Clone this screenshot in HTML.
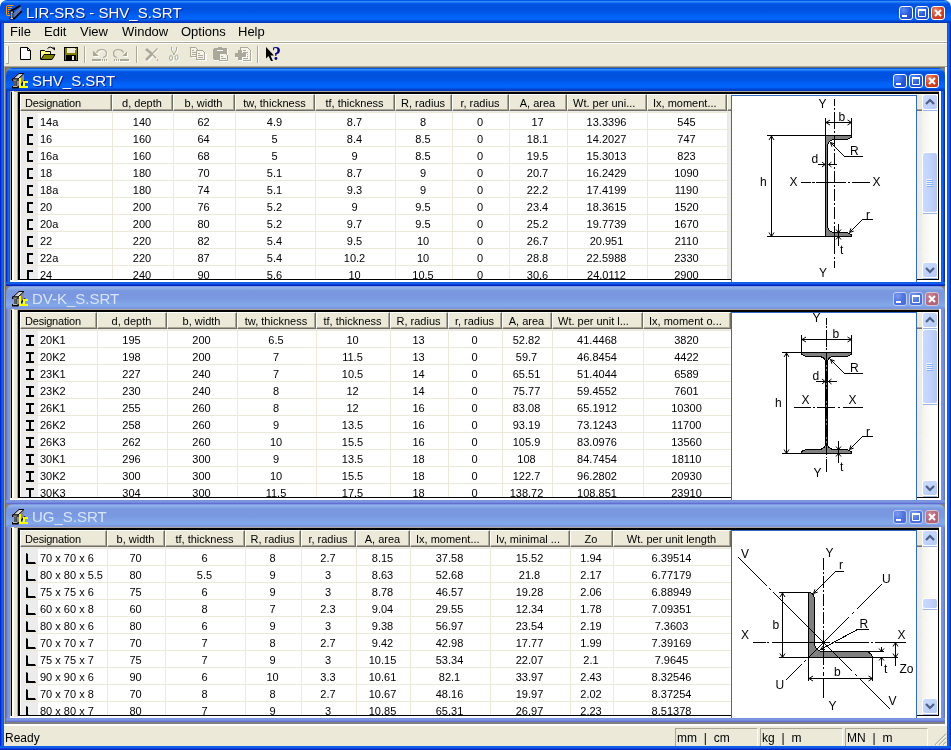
<!DOCTYPE html>
<html lang="en"><head><meta charset="utf-8"><title>LIR-SRS - SHV_S.SRT</title>
<style>
*{box-sizing:border-box;margin:0;padding:0}
html,body{width:951px;height:750px;overflow:hidden;background:#fff;font-family:"Liberation Sans",sans-serif}
#win{will-change:transform;position:absolute;left:0;top:0;width:951px;height:750px;overflow:hidden;background:#ece9d8}
.abs{position:absolute}
#frameL{left:0;top:23px;width:4px;height:727px;background:linear-gradient(90deg,#0019cf 0,#0831d9 25%,#166aee 50%,#0855dd 100%)}
#frameR{left:947px;top:23px;width:4px;height:727px;background:linear-gradient(90deg,#0855dd 0,#166aee 40%,#0831d9 75%,#001ea0 100%)}
#frameB{left:0;top:746px;width:951px;height:4px;background:linear-gradient(180deg,#0855dd 0,#166aee 30%,#0831d9 70%,#001ea0 100%)}
#title{left:0;top:0;width:951px;height:23px;border-radius:7px 7px 0 0;background:linear-gradient(180deg,#0058e6 0,#0058e6 1px,#3a8ff8 1px,#2d85f5 2px,#0a64ee 3px,#0054e3 4px,#0051dd 8px,#0055e5 12px,#0062f8 16px,#0066ff 19px,#0058ea 20px,#004ad6 21px,#003dc8 22px,#0030b0 23px)}
#title .t,.ctitle .t{position:absolute;color:#fff;white-space:nowrap;text-shadow:1px 1px 0 #0a1883}
.btn{position:absolute;width:14px;height:14px;border:1px solid #fff;border-radius:3px;background:radial-gradient(circle at 30% 25%,#5d8cf0 0,#2a5fe0 45%,#1645c6 100%)}
.btn.x{background:radial-gradient(circle at 30% 25%,#e8866a 0,#d5482a 50%,#b8300f 100%)}
.btn svg{position:absolute;left:0;top:0}
.ina .btn{border-color:#c3cff2;background:radial-gradient(circle at 30% 25%,#7f9cee 0,#5076e0 45%,#4468d8 100%)}
.ina .btn.x{border-color:#d9c4d4;background:radial-gradient(circle at 30% 25%,#c98a9a 0,#b5687c 50%,#ad5f74 100%)}
#menu{left:4px;top:23px;width:943px;height:18px;font-size:13px;line-height:15px;color:#000}
#menu span{position:absolute;top:1px;white-space:nowrap}
.hl{position:absolute;left:4px;width:943px;height:1px}
#tb{left:4px;top:44px;width:943px;height:22px}
#status{left:4px;top:726px;width:943px;height:20px;font-size:12px;line-height:15px}
#status span{position:absolute;white-space:nowrap}
.pane{position:absolute;top:728px;height:18px;width:83px;border-left:1px solid #aca899;border-top:1px solid #aca899;border-right:1px solid #fff}
.child{position:absolute;left:6px;width:939px;height:218px;overflow:hidden}
.ctitle{position:absolute;left:0;top:0;width:939px;height:23px;border-radius:7px 7px 0 0}
.child.act .ctitle{background:linear-gradient(180deg,#0058e6 0,#0058e6 1px,#3a8ff8 1px,#2d85f5 2px,#0a64ee 3px,#0054e3 4px,#0051dd 8px,#0055e5 12px,#0062f8 16px,#0066ff 19px,#0058ea 20px,#004ad6 21px,#003dc8 22px,#0030b0 23px)}
.child.ina .ctitle{background:linear-gradient(180deg,#7697e7 0,#7e9ee3 3%,#94afe8 6%,#97b4e9 8%,#82a5e4 14%,#7c9fe2 17%,#7996de 25%,#7b99e1 56%,#82a9e9 81%,#80a5e7 89%,#7b96e1 94%,#7a93df 97%,#8a9fe0 100%)}
.child.ina .ctitle .t{color:#d8e4f8;text-shadow:none}
.child.act .bl{background:linear-gradient(90deg,#0019cf 0,#0831d9 25%,#166aee 50%,#0855dd 100%)}
.child.act .br{background:linear-gradient(90deg,#0855dd 0,#166aee 40%,#0831d9 75%,#001ea0 100%)}
.child.act .bb{background:linear-gradient(180deg,#0855dd 0,#166aee 30%,#0831d9 70%,#001ea0 100%)}
.child.ina .bl{background:linear-gradient(90deg,#5b69cf 0,#6f86dc 30%,#7a96df 60%,#7a93df 100%)}
.child.ina .br{background:linear-gradient(90deg,#7a93df 0,#7a96df 40%,#6f86dc 70%,#5b69cf 100%)}
.child.ina .bb{background:linear-gradient(180deg,#7a93df 0,#7a96df 40%,#6f86dc 70%,#5b5fc8 100%)}
.bl{position:absolute;left:0;top:23px;width:4px;height:195px}
.br{position:absolute;left:935px;top:23px;width:4px;height:195px}
.bb{position:absolute;left:0;top:214px;width:939px;height:4px}
.cl{position:absolute;left:4px;top:23px;width:931px;height:191px;background:#ece9d8;overflow:hidden}
.lv{position:absolute;left:10px;top:3px;width:908px;height:185px;background:#ececec;overflow:hidden;font-size:11px;color:#000}
.hd{position:absolute;left:0;top:0;height:17px;width:908px;background:#ece9d8}
.hc{position:absolute;top:0;height:17px;border-top:1px solid #fff;border-left:1px solid #fff;border-right:1px solid #716f64;border-bottom:1px solid #716f64;background:#ece9d8;white-space:nowrap;overflow:hidden}
.hc i{position:absolute;left:0;top:0;right:0;bottom:0;border-right:1px solid #aca899;border-bottom:1px solid #aca899}
.hc b{position:absolute;left:0;right:1px;top:2px;font-weight:normal;line-height:13px;text-align:center}
.hc.l b{text-align:left;left:4px}
.hc.e b{left:5px}
.hc.d b{letter-spacing:-0.2px}
.row{position:absolute;left:0;height:17px;width:908px;border-top:1px solid #ece9d8}
.c{position:absolute;top:0;height:16px;background:#fff;border-left:1px solid #ece9d8;text-align:center;line-height:19px;white-space:nowrap;overflow:hidden}
.c{padding-right:2px}
.c0{border-left:0;text-align:left;padding-left:2px}
.dg{position:absolute;left:721px;top:4px;width:186px;height:190px;background:#fff;border:1px solid #316ac5;border-bottom:0}
.dg svg{position:absolute;left:-1px;top:-1px}
.dg text{font-family:"Liberation Sans",sans-serif;font-size:12px;fill:#000}
.sb{position:absolute;left:912px;top:3px;width:16px;height:185px;background:linear-gradient(90deg,#f3f1ec 0,#f8f7f3 30%,#fdfdfb 60%,#fefefb 100%)}
.sbb{position:absolute;left:0;width:16px;height:16px;border:1px solid #fff;border-radius:3px;background:linear-gradient(135deg,#cbdcff 0,#c1d3fb 50%,#b7caf5 100%)}
.sbs{position:absolute;left:1px;width:14px;height:1px;background:#9fb5e4}
.sbt{position:absolute;left:0;width:16px;border:1px solid #fff;border-radius:3px;background:linear-gradient(90deg,#c9d9fe 0,#c2d3fc 50%,#b4c7f3 100%)}
</style></head>
<body>
<div id="win">
<div class="abs" style="left:0;top:0;width:951px;height:10px;background:#fff"></div>
<div id="title" class="abs"><svg class="abs" style="left:4px;top:3px" width="20" height="18" viewBox="4 3 20 18">
<path d="M13.500 5.500h-6q-1 0-1 1v8q0 1 1 1h3" fill="none" stroke="#f09a1c" stroke-width="1"/>
<path d="M8 7.500h4M8 9.500h2.500M8 11.500h1.500M8 13.500h1" stroke="#f09a1c" stroke-width="1" fill="none"/>
<path d="M13.500 12.500L21.500 6v5L14 19z" fill="#4f6db0"/>
<path d="M14.500 13.500L21 8M15 15.500L21 10" stroke="#8fa3cf" stroke-width="0.700" stroke-dasharray="1 1"/>
<path d="M10 11.500L20.500 5.500" stroke="#000" stroke-width="1.700"/>
<path d="M14 19L21.800 11" stroke="#000" stroke-width="1.700"/>
<path d="M9.500 11h4.500v2h-1.200v4.500h1.200v2h-4.500v-2h1.200v-4.500h-1.200z" fill="#000"/>
<path d="M10.500 12h2.500M11.800 12v6.500M10.500 18.500h2.500" stroke="#d8d8d8" stroke-width="1" fill="none"/>
</svg><span class="t" style="left:26px;top:4px;font-size:15px;line-height:17px">LIR-SRS - SHV_S.SRT</span><div class="btn" style="left:899px;top:6px"><svg width="12" height="12"><rect x="2" y="8" width="5" height="2" fill="#fff"/></svg></div><div class="btn" style="left:915px;top:6px"><svg width="12" height="12"><path d="M2.5 3.5h7v6h-7z" fill="none" stroke="#fff"/><rect x="2" y="2" width="8" height="2" fill="#fff"/></svg></div><div class="btn x" style="left:931px;top:6px"><svg width="12" height="12"><path d="M3 3l6 6M9 3l-6 6" stroke="#fff" stroke-width="2" fill="none"/></svg></div></div>
<div id="frameL" class="abs"></div><div id="frameR" class="abs"></div><div id="frameB" class="abs"></div>
<div id="menu" class="abs"><span style="left:6px">File</span><span style="left:40px">Edit</span><span style="left:76px">View</span><span style="left:118px">Window</span><span style="left:177px">Options</span><span style="left:234px">Help</span></div>
<div class="hl" style="top:41px;background:#fff"></div><div class="hl" style="top:42px;background:#aca899"></div><div class="hl" style="top:43px;background:#fff"></div>
<svg id="tb" class="abs" width="943" height="22" viewBox="4 44 943 22">
<rect x="6" y="46" width="2" height="17" fill="#fff"/><rect x="8" y="46" width="1" height="17" fill="#aca899"/><rect x="6" y="63" width="3" height="1" fill="#aca899"/>
<!-- new -->
<path d="M20.5 47.5h7l3 3v9h-10z" fill="#fff" stroke="#000"/><path d="M27.5 47.5v3h3" fill="none" stroke="#000"/>
<!-- open -->
<path d="M40.5 59.5v-9h4l1 1h5v3" fill="#ffff80" stroke="#000"/><path d="M41 59.5l3-5h11l-3 5z" fill="#808000" stroke="#000"/>
<path d="M47.5 48.5q3-3 6 0.5" fill="none" stroke="#000"/><path d="M52 47.5h3v3z" fill="#000"/>
<!-- save -->
<rect x="64.5" y="47.5" width="13" height="13" fill="#808000" stroke="#000"/><rect x="67" y="48" width="8" height="5" fill="#ece9d8"/><rect x="66" y="55" width="10" height="6" fill="#000"/><rect x="72" y="56" width="2" height="4" fill="#ece9d8"/><rect x="75" y="49" width="1" height="1" fill="#fff"/>
<rect x="84" y="46" width="1" height="17" fill="#aca899"/><rect x="85" y="46" width="1" height="17" fill="#fff"/>
<!-- undo -->
<g shape-rendering="crispEdges">
<g transform="translate(1,1)" fill="#fff" stroke="none"><path d="M93 51v5h5z"/><rect x="92" y="59" width="9" height="2"/><rect x="102" y="59" width="1" height="2"/><rect x="104" y="59" width="1" height="2"/><rect x="106" y="59" width="1" height="2"/></g>
<path d="M93 51v5h5z" fill="#aca899"/><rect x="92" y="59" width="9" height="2" fill="#aca899"/><rect x="102" y="59" width="1" height="2" fill="#aca899"/><rect x="104" y="59" width="1" height="2" fill="#aca899"/><rect x="106" y="59" width="1" height="2" fill="#aca899"/>
<g transform="translate(1,1)" fill="#fff" stroke="none"><path d="M127 51v5h-5z"/><rect x="120" y="59" width="9" height="2"/><rect x="114" y="59" width="1" height="2"/><rect x="116" y="59" width="1" height="2"/><rect x="118" y="59" width="1" height="2"/></g>
<path d="M127 51v5h-5z" fill="#aca899"/><rect x="120" y="59" width="9" height="2" fill="#aca899"/><rect x="114" y="59" width="1" height="2" fill="#aca899"/><rect x="116" y="59" width="1" height="2" fill="#aca899"/><rect x="118" y="59" width="1" height="2" fill="#aca899"/>
</g>
<path d="M97.500 53.500Q98 50 101.500 49.500Q106.500 49.500 106.500 53.500Q106.500 57 103.500 57.500" fill="none" stroke="#fff" stroke-width="1" transform="translate(1,1)"/>
<path d="M96.500 52.500Q98 49.500 101.500 49.500Q106.500 49.500 106.500 53.500Q106.500 57 103 57.500" fill="none" stroke="#aca899" stroke-width="1.200"/>
<path d="M123.500 52.500Q122 49.500 118.500 49.500Q113.500 49.500 113.500 53.500Q113.500 57 117 57.500" fill="none" stroke="#aca899" stroke-width="1.200"/>
<rect x="136" y="46" width="1" height="17" fill="#aca899"/><rect x="137" y="46" width="1" height="17" fill="#fff"/>
<!-- delete -->
<g transform="translate(1,1)" stroke="#fff" fill="none"><path d="M146 49l6 5M146 60l6-6" stroke-width="2.600"/><path d="M152 54l5.500-5.500M152 54l4 4" stroke-width="1"/></g>
<path d="M146 49l6 5M146 60l6-6" stroke="#aca899" stroke-width="2.600" fill="none"/><path d="M152 54l5.500-5.500M152 54l4 4M157 59.500l1 1" stroke="#aca899" stroke-width="1.200" fill="none"/>
<!-- cut -->
<g transform="translate(1,1)" stroke="#fff" fill="none"><path d="M171.500 47v3l3 5M176.500 47v3l-3 5"/><ellipse cx="171" cy="58" rx="1.500" ry="2.500"/><ellipse cx="176.500" cy="57.500" rx="1.500" ry="2.500"/></g>
<path d="M171.500 47v3l3 5M176.500 47v3l-3 5" stroke="#aca899" fill="none"/><ellipse cx="171" cy="58" rx="1.500" ry="2.500" fill="none" stroke="#aca899"/><ellipse cx="176.500" cy="57.500" rx="1.500" ry="2.500" fill="none" stroke="#aca899"/>
<!-- copy -->
<g shape-rendering="crispEdges">
<path d="M191.500 48.500h5.500l3 3v6.500h-8.500z" fill="#fff" stroke="none"/>
<path d="M190.500 47.500h5l2 2v7h-7z" fill="#f6f4ea" stroke="#aca899"/><path d="M192 50.500h2M192 52.500h4M192 54.500h4" stroke="#aca899"/>
<path d="M197.500 51.500h6l3 3v6.500h-9z" fill="#fff" stroke="none"/>
<path d="M196.500 50.500h6l2 2v7h-8z" fill="#f6f4ea" stroke="#aca899"/><path d="M198 53.500h2M198 55.500h5M198 57.500h5" stroke="#aca899"/>
<!-- paste -->
<rect x="214" y="49" width="14" height="12" fill="#fff" stroke="none"/>
<path d="M214 48h12l1 1v10l-1 1h-12l-1-1v-10z" fill="#aca899" stroke="none"/><rect x="218" y="47" width="4" height="1" fill="#aca899"/><rect x="217" y="50" width="6" height="1" fill="#fff"/>
<path d="M220.500 55h7.500v7h-7.500z" fill="#fff" stroke="none"/>
<path d="M219.500 53.500h6l2 2v5h-8z" fill="#f6f4ea" stroke="#aca899"/><path d="M221 56.500h2M221 58.500h5" stroke="#aca899"/>
<!-- paste special -->
<path d="M241.500 48.500h7l3 3v10h-10z" fill="#fff" stroke="none"/>
<path d="M240.500 47.500h7l3 3v10h-10z" fill="#f6f4ea" stroke="#aca899"/><path d="M243 50.500h3M243 52.500h5M243 54.500h5M243 56.500h5M243 58.500h5" stroke="#aca899"/>
<path d="M236 54h11v4h-11zM239 51h4v10h-4z" fill="#fff" stroke="none"/>
<path d="M235 53h11v4h-11zM238 50h4v10h-4z" fill="#aca899" stroke="none"/>
</g>
<rect x="257" y="46" width="1" height="17" fill="#aca899"/><rect x="258" y="46" width="1" height="17" fill="#fff"/>
<!-- help -->
<path d="M266 47v11.500l2.500-2.500l2.500 5h2l-2.500-5.500h3.500z" fill="#000"/>
<text x="272" y="59.500" font-family="Liberation Serif, serif" font-weight="bold" font-size="18" fill="#000080">?</text>
</svg>
<div class="hl" style="top:66px;background:#aca899"></div>
<div class="abs" style="left:4px;top:67px;width:943px;height:659px;background:#808080"></div>
<div class="abs" style="left:4px;top:66px;width:1px;height:660px;background:#aca899"></div>
<div class="abs" style="left:5px;top:67px;width:1px;height:657px;background:#716f64"></div>
<div class="abs" style="left:5px;top:67px;width:940px;height:1px;background:#716f64"></div>
<div class="abs" style="left:945px;top:67px;width:2px;height:659px;background:#fff"></div>
<div class="abs" style="left:4px;top:724px;width:943px;height:2px;background:#fff"></div>
<div class="child act" style="top:68px"><div class="ctitle"><svg class="abs" style="left:4px;top:4px" width="26" height="18" viewBox="10 72 26 18">
<path d="M16 80.500L18 79L24 74V81L18 87.500H16z" fill="#8c8c8c"/>
<path d="M13 79L19 73.500H24L18 79z" fill="#d4d4d4" stroke="#000" stroke-width="1"/>
<path d="M18.500 87.500L25 80.500" stroke="#000" stroke-width="1.600"/>
<path d="M12 78.500h6.500v2.500h-2v5h2v2.500h-6.500v-2.500h2v-5h-2z" fill="#000"/>
<path d="M13 80h4.500M15 80v6.500M13 86.500h4.500" stroke="#b4b4b4" stroke-width="1" fill="none"/>
<path d="M19 78h2v8h7v2h-9z" fill="#ff0"/>
<path d="M23 81h5v2h-3v3h-2z" fill="#ff0"/>
</svg><span class="t" style="left:26px;top:4px;font-size:15px;line-height:17px">SHV_S.SRT</span><div class="btn" style="left:887px;top:6px"><svg width="12" height="12"><rect x="2" y="8" width="5" height="2" fill="#fff"/></svg></div><div class="btn" style="left:903px;top:6px"><svg width="12" height="12"><path d="M2.5 3.5h7v6h-7z" fill="none" stroke="#fff"/><rect x="2" y="2" width="8" height="2" fill="#fff"/></svg></div><div class="btn x" style="left:919px;top:6px"><svg width="12" height="12"><path d="M3 3l6 6M9 3l-6 6" stroke="#fff" stroke-width="2" fill="none"/></svg></div></div><div class="bl"></div><div class="br"></div><div class="bb"></div><div class="cl"><div class="abs" style="left:0;top:0;width:931px;height:1px;background:#aca899"></div><div class="abs" style="left:0;top:0;width:1px;height:189px;background:#aca899"></div><div class="abs" style="left:7px;top:1px;width:1px;height:188px;background:#aca899"></div><div class="abs" style="left:1px;top:1px;width:1px;height:188px;background:#000"></div><div class="abs" style="left:2px;top:0;width:2px;height:190px;background:#fff"></div><div class="abs" style="left:8px;top:1px;width:921px;height:188px;background:#000"></div><div class="abs" style="left:0;top:189px;width:931px;height:2px;background:#fff"></div><div class="abs" style="left:929px;top:0;width:2px;height:191px;background:#fff"></div><div class="abs" style="left:4px;top:189px;width:4px;height:1px;background:#ece9d8"></div><div class="lv"><div class="hd"><div class="hc l d" style="left:0px;width:92px"><i></i><b>Designation</b></div><div class="hc" style="left:92px;width:61px"><i></i><b>d, depth</b></div><div class="hc" style="left:153px;width:62px"><i></i><b>b, width</b></div><div class="hc" style="left:215px;width:80px"><i></i><b>tw, thickness</b></div><div class="hc" style="left:295px;width:80px"><i></i><b>tf, thickness</b></div><div class="hc" style="left:375px;width:57px"><i></i><b>R, radius</b></div><div class="hc" style="left:432px;width:57px"><i></i><b>r, radius</b></div><div class="hc" style="left:489px;width:58px"><i></i><b>A, area</b></div><div class="hc l e" style="left:547px;width:80px"><i></i><b>Wt. per uni...</b></div><div class="hc l e" style="left:627px;width:80px"><i></i><b>Ix, moment...</b></div><div class="hc" style="left:707px;width:201px"><i></i></div></div><div class="row" style="top:18px"><svg class="abs" style="left:7px;top:4px" width="7" height="12"><path d="M0 0h6v2h-4v7h4v2h-6z" fill="#000"/></svg><div class="c c0" style="left:18px;width:74px">14a</div><div class="c" style="left:92px;width:61px">140</div><div class="c" style="left:153px;width:62px">62</div><div class="c" style="left:215px;width:80px">4.9</div><div class="c" style="left:295px;width:80px">8.7</div><div class="c" style="left:375px;width:57px">8</div><div class="c" style="left:432px;width:57px">0</div><div class="c" style="left:489px;width:58px">17</div><div class="c" style="left:547px;width:80px">13.3396</div><div class="c" style="left:627px;width:80px">545</div><div class="c" style="left:707px;width:1px;background:#ececec"></div></div><div class="row" style="top:35px"><svg class="abs" style="left:7px;top:4px" width="7" height="12"><path d="M0 0h6v2h-4v7h4v2h-6z" fill="#000"/></svg><div class="c c0" style="left:18px;width:74px">16</div><div class="c" style="left:92px;width:61px">160</div><div class="c" style="left:153px;width:62px">64</div><div class="c" style="left:215px;width:80px">5</div><div class="c" style="left:295px;width:80px">8.4</div><div class="c" style="left:375px;width:57px">8.5</div><div class="c" style="left:432px;width:57px">0</div><div class="c" style="left:489px;width:58px">18.1</div><div class="c" style="left:547px;width:80px">14.2027</div><div class="c" style="left:627px;width:80px">747</div><div class="c" style="left:707px;width:1px;background:#ececec"></div></div><div class="row" style="top:52px"><svg class="abs" style="left:7px;top:4px" width="7" height="12"><path d="M0 0h6v2h-4v7h4v2h-6z" fill="#000"/></svg><div class="c c0" style="left:18px;width:74px">16a</div><div class="c" style="left:92px;width:61px">160</div><div class="c" style="left:153px;width:62px">68</div><div class="c" style="left:215px;width:80px">5</div><div class="c" style="left:295px;width:80px">9</div><div class="c" style="left:375px;width:57px">8.5</div><div class="c" style="left:432px;width:57px">0</div><div class="c" style="left:489px;width:58px">19.5</div><div class="c" style="left:547px;width:80px">15.3013</div><div class="c" style="left:627px;width:80px">823</div><div class="c" style="left:707px;width:1px;background:#ececec"></div></div><div class="row" style="top:69px"><svg class="abs" style="left:7px;top:4px" width="7" height="12"><path d="M0 0h6v2h-4v7h4v2h-6z" fill="#000"/></svg><div class="c c0" style="left:18px;width:74px">18</div><div class="c" style="left:92px;width:61px">180</div><div class="c" style="left:153px;width:62px">70</div><div class="c" style="left:215px;width:80px">5.1</div><div class="c" style="left:295px;width:80px">8.7</div><div class="c" style="left:375px;width:57px">9</div><div class="c" style="left:432px;width:57px">0</div><div class="c" style="left:489px;width:58px">20.7</div><div class="c" style="left:547px;width:80px">16.2429</div><div class="c" style="left:627px;width:80px">1090</div><div class="c" style="left:707px;width:1px;background:#ececec"></div></div><div class="row" style="top:86px"><svg class="abs" style="left:7px;top:4px" width="7" height="12"><path d="M0 0h6v2h-4v7h4v2h-6z" fill="#000"/></svg><div class="c c0" style="left:18px;width:74px">18a</div><div class="c" style="left:92px;width:61px">180</div><div class="c" style="left:153px;width:62px">74</div><div class="c" style="left:215px;width:80px">5.1</div><div class="c" style="left:295px;width:80px">9.3</div><div class="c" style="left:375px;width:57px">9</div><div class="c" style="left:432px;width:57px">0</div><div class="c" style="left:489px;width:58px">22.2</div><div class="c" style="left:547px;width:80px">17.4199</div><div class="c" style="left:627px;width:80px">1190</div><div class="c" style="left:707px;width:1px;background:#ececec"></div></div><div class="row" style="top:103px"><svg class="abs" style="left:7px;top:4px" width="7" height="12"><path d="M0 0h6v2h-4v7h4v2h-6z" fill="#000"/></svg><div class="c c0" style="left:18px;width:74px">20</div><div class="c" style="left:92px;width:61px">200</div><div class="c" style="left:153px;width:62px">76</div><div class="c" style="left:215px;width:80px">5.2</div><div class="c" style="left:295px;width:80px">9</div><div class="c" style="left:375px;width:57px">9.5</div><div class="c" style="left:432px;width:57px">0</div><div class="c" style="left:489px;width:58px">23.4</div><div class="c" style="left:547px;width:80px">18.3615</div><div class="c" style="left:627px;width:80px">1520</div><div class="c" style="left:707px;width:1px;background:#ececec"></div></div><div class="row" style="top:120px"><svg class="abs" style="left:7px;top:4px" width="7" height="12"><path d="M0 0h6v2h-4v7h4v2h-6z" fill="#000"/></svg><div class="c c0" style="left:18px;width:74px">20a</div><div class="c" style="left:92px;width:61px">200</div><div class="c" style="left:153px;width:62px">80</div><div class="c" style="left:215px;width:80px">5.2</div><div class="c" style="left:295px;width:80px">9.7</div><div class="c" style="left:375px;width:57px">9.5</div><div class="c" style="left:432px;width:57px">0</div><div class="c" style="left:489px;width:58px">25.2</div><div class="c" style="left:547px;width:80px">19.7739</div><div class="c" style="left:627px;width:80px">1670</div><div class="c" style="left:707px;width:1px;background:#ececec"></div></div><div class="row" style="top:137px"><svg class="abs" style="left:7px;top:4px" width="7" height="12"><path d="M0 0h6v2h-4v7h4v2h-6z" fill="#000"/></svg><div class="c c0" style="left:18px;width:74px">22</div><div class="c" style="left:92px;width:61px">220</div><div class="c" style="left:153px;width:62px">82</div><div class="c" style="left:215px;width:80px">5.4</div><div class="c" style="left:295px;width:80px">9.5</div><div class="c" style="left:375px;width:57px">10</div><div class="c" style="left:432px;width:57px">0</div><div class="c" style="left:489px;width:58px">26.7</div><div class="c" style="left:547px;width:80px">20.951</div><div class="c" style="left:627px;width:80px">2110</div><div class="c" style="left:707px;width:1px;background:#ececec"></div></div><div class="row" style="top:154px"><svg class="abs" style="left:7px;top:4px" width="7" height="12"><path d="M0 0h6v2h-4v7h4v2h-6z" fill="#000"/></svg><div class="c c0" style="left:18px;width:74px">22a</div><div class="c" style="left:92px;width:61px">220</div><div class="c" style="left:153px;width:62px">87</div><div class="c" style="left:215px;width:80px">5.4</div><div class="c" style="left:295px;width:80px">10.2</div><div class="c" style="left:375px;width:57px">10</div><div class="c" style="left:432px;width:57px">0</div><div class="c" style="left:489px;width:58px">28.8</div><div class="c" style="left:547px;width:80px">22.5988</div><div class="c" style="left:627px;width:80px">2330</div><div class="c" style="left:707px;width:1px;background:#ececec"></div></div><div class="row" style="top:171px"><svg class="abs" style="left:7px;top:4px" width="7" height="12"><path d="M0 0h6v2h-4v7h4v2h-6z" fill="#000"/></svg><div class="c c0" style="left:18px;width:74px">24</div><div class="c" style="left:92px;width:61px">240</div><div class="c" style="left:153px;width:62px">90</div><div class="c" style="left:215px;width:80px">5.6</div><div class="c" style="left:295px;width:80px">10</div><div class="c" style="left:375px;width:57px">10.5</div><div class="c" style="left:432px;width:57px">0</div><div class="c" style="left:489px;width:58px">30.6</div><div class="c" style="left:547px;width:80px">24.0112</div><div class="c" style="left:627px;width:80px">2900</div><div class="c" style="left:707px;width:1px;background:#ececec"></div></div><div class="abs" style="left:0;top:17px;width:1px;height:168px;background:#fff"></div></div><div class="sb"><div class="sbb" style="top:0"><svg class="abs" style="left:0;top:0" width="14" height="14"><path d="M3 9l4-4l4 4" fill="none" stroke="#4d6185" stroke-width="2.200"/></svg></div><div class="sbt" style="top:58px;height:61px"><svg class="abs" style="left:3px;top:26px" width="8" height="9"><path d="M0 0.500h6M0 2.500h6M0 4.500h6M0 6.500h6" stroke="#eef4fe"/><path d="M1 1.500h6M1 3.500h6M1 5.500h6M1 7.500h6" stroke="#8cb0f8"/></svg></div><div class="sbb" style="top:168px;height:16px"><svg class="abs" style="left:0;top:0" width="14" height="14"><path d="M3 5l4 4l4-4" fill="none" stroke="#4d6185" stroke-width="2.200"/></svg></div><div class="sbs" style="top:16px"></div><div class="sbs" style="top:184px"></div><div class="sbs" style="top:119px"></div></div><div class="dg" style="top:4px"><svg width="186" height="190" viewBox="731 95 186 190" fill="none" stroke="#000" stroke-width="1" shape-rendering="crispEdges"><path d="M825.5 135.5H851.5V137.5L846.5 139.5H834.5Q828 140 827.5 146V226Q828 232 834.5 232.5H846.5L851.5 234.5V236.5H825.5Z" fill="#808080"/><path d="M834.5 99V106M834.5 108V110M834.5 112V129M834.5 131V133M834.5 135V147M834.5 149V151M834.5 153V165M834.5 167V169M834.5 171V183M834.5 185V187M834.5 189V201M834.5 203V205M834.5 207V219M834.5 222V224M834.5 226V254M834.5 257V259M834.5 261V268" /><path d="M801 182.5H811M812 182.5H815M816 182.5H846M848 182.5H850M852 182.5H870" /><path d="M767 135.5H852" /><path d="M767 236.5H852" /><path d="M771.5 136V236" /><path shape-rendering="auto" d="M774.0 140.0L771.5 136L769.0 140.0"/><path shape-rendering="auto" d="M769.0 232.5L771.5 236.5L774.0 232.5"/><path d="M825.5 118V135" /><path d="M851.5 118V135" /><path d="M826 122.5H851" /><path shape-rendering="auto" d="M830.0 120.0L826 122.5L830.0 125.0"/><path shape-rendering="auto" d="M847.5 125.0L851.5 122.5L847.5 120.0"/><path d="M830.5 142.5L844.5 156.5H863" /><path shape-rendering="auto" d="M834.7 143.9L830.5 142.5L831.9 146.7"/><path d="M818 164.5H825M828 164.5H837" /><path shape-rendering="auto" d="M822.0 167.0L825 164.5L822.0 162.0"/><path shape-rendering="auto" d="M831.5 162.0L828.5 164.5L831.5 167.0"/><path d="M873 219.5H862.5L849.5 232.5" /><path shape-rendering="auto" d="M850.9 228.3L849.5 232.5L853.7 231.1"/><path d="M838.5 224V246" /><path shape-rendering="auto" d="M836.0 229.5L838.5 232.5L841.0 229.5"/><path shape-rendering="auto" d="M841.0 239.5L838.5 236.5L836.0 239.5"/><text x="818.5" y="107.5" stroke="none" text-anchor="start">Y</text><text x="819" y="276.5" stroke="none" text-anchor="start">Y</text><text x="789.5" y="185.5" stroke="none" text-anchor="start">X</text><text x="872.5" y="185.5" stroke="none" text-anchor="start">X</text><text x="838.5" y="121" stroke="none" text-anchor="start">b</text><text x="850" y="155" stroke="none" text-anchor="start">R</text><text x="811.5" y="163" stroke="none" text-anchor="start">d</text><text x="760" y="186" stroke="none" text-anchor="start">h</text><text x="866" y="218.5" stroke="none" text-anchor="start">r</text><text x="840" y="254" stroke="none" text-anchor="start">t</text></svg></div></div></div>
<div class="child ina" style="top:286px"><div class="ctitle"><svg class="abs" style="left:4px;top:4px" width="26" height="18" viewBox="10 72 26 18">
<path d="M16 80.500L18 79L24 74V81L18 87.500H16z" fill="#8c8c8c"/>
<path d="M13 79L19 73.500H24L18 79z" fill="#d4d4d4" stroke="#000" stroke-width="1"/>
<path d="M18.500 87.500L25 80.500" stroke="#000" stroke-width="1.600"/>
<path d="M12 78.500h6.500v2.500h-2v5h2v2.500h-6.500v-2.500h2v-5h-2z" fill="#000"/>
<path d="M13 80h4.500M15 80v6.500M13 86.500h4.500" stroke="#b4b4b4" stroke-width="1" fill="none"/>
<path d="M19 78h2v8h7v2h-9z" fill="#ff0"/>
<path d="M23 81h5v2h-3v3h-2z" fill="#ff0"/>
</svg><span class="t" style="left:26px;top:4px;font-size:15px;line-height:17px">DV-K_S.SRT</span><div class="btn" style="left:887px;top:6px"><svg width="12" height="12"><rect x="2" y="8" width="5" height="2" fill="#fff"/></svg></div><div class="btn" style="left:903px;top:6px"><svg width="12" height="12"><path d="M2.5 3.5h7v6h-7z" fill="none" stroke="#fff"/><rect x="2" y="2" width="8" height="2" fill="#fff"/></svg></div><div class="btn x" style="left:919px;top:6px"><svg width="12" height="12"><path d="M3 3l6 6M9 3l-6 6" stroke="#fff" stroke-width="2" fill="none"/></svg></div></div><div class="bl"></div><div class="br"></div><div class="bb"></div><div class="cl"><div class="abs" style="left:0;top:0;width:931px;height:1px;background:#aca899"></div><div class="abs" style="left:0;top:0;width:1px;height:189px;background:#aca899"></div><div class="abs" style="left:7px;top:1px;width:1px;height:188px;background:#aca899"></div><div class="abs" style="left:1px;top:1px;width:1px;height:188px;background:#000"></div><div class="abs" style="left:2px;top:0;width:2px;height:190px;background:#fff"></div><div class="abs" style="left:8px;top:1px;width:921px;height:188px;background:#000"></div><div class="abs" style="left:0;top:189px;width:931px;height:2px;background:#fff"></div><div class="abs" style="left:929px;top:0;width:2px;height:191px;background:#fff"></div><div class="abs" style="left:4px;top:189px;width:4px;height:1px;background:#ece9d8"></div><div class="lv"><div class="hd"><div class="hc l d" style="left:0px;width:77px"><i></i><b>Designation</b></div><div class="hc" style="left:77px;width:70px"><i></i><b>d, depth</b></div><div class="hc" style="left:147px;width:70px"><i></i><b>b, width</b></div><div class="hc" style="left:217px;width:79px"><i></i><b>tw, thickness</b></div><div class="hc" style="left:296px;width:74px"><i></i><b>tf, thickness</b></div><div class="hc" style="left:370px;width:58px"><i></i><b>R, radius</b></div><div class="hc" style="left:428px;width:54px"><i></i><b>r, radius</b></div><div class="hc" style="left:482px;width:50px"><i></i><b>A, area</b></div><div class="hc l e" style="left:532px;width:91px"><i></i><b>Wt. per unit l...</b></div><div class="hc l e" style="left:623px;width:88px"><i></i><b>Ix, moment o...</b></div><div class="hc" style="left:711px;width:197px"><i></i></div></div><div class="row" style="top:18px"><svg class="abs" style="left:6px;top:4px" width="9" height="12"><path d="M0 0h8v2h-3v7h3v2h-8v-2h3v-7h-3z" fill="#000"/></svg><div class="c c0" style="left:18px;width:59px">20K1</div><div class="c" style="left:77px;width:70px">195</div><div class="c" style="left:147px;width:70px">200</div><div class="c" style="left:217px;width:79px">6.5</div><div class="c" style="left:296px;width:74px">10</div><div class="c" style="left:370px;width:58px">13</div><div class="c" style="left:428px;width:54px">0</div><div class="c" style="left:482px;width:50px">52.82</div><div class="c" style="left:532px;width:91px">41.4468</div><div class="c" style="left:623px;width:88px">3820</div><div class="c" style="left:711px;width:1px;background:#ececec"></div></div><div class="row" style="top:35px"><svg class="abs" style="left:6px;top:4px" width="9" height="12"><path d="M0 0h8v2h-3v7h3v2h-8v-2h3v-7h-3z" fill="#000"/></svg><div class="c c0" style="left:18px;width:59px">20K2</div><div class="c" style="left:77px;width:70px">198</div><div class="c" style="left:147px;width:70px">200</div><div class="c" style="left:217px;width:79px">7</div><div class="c" style="left:296px;width:74px">11.5</div><div class="c" style="left:370px;width:58px">13</div><div class="c" style="left:428px;width:54px">0</div><div class="c" style="left:482px;width:50px">59.7</div><div class="c" style="left:532px;width:91px">46.8454</div><div class="c" style="left:623px;width:88px">4422</div><div class="c" style="left:711px;width:1px;background:#ececec"></div></div><div class="row" style="top:52px"><svg class="abs" style="left:6px;top:4px" width="9" height="12"><path d="M0 0h8v2h-3v7h3v2h-8v-2h3v-7h-3z" fill="#000"/></svg><div class="c c0" style="left:18px;width:59px">23K1</div><div class="c" style="left:77px;width:70px">227</div><div class="c" style="left:147px;width:70px">240</div><div class="c" style="left:217px;width:79px">7</div><div class="c" style="left:296px;width:74px">10.5</div><div class="c" style="left:370px;width:58px">14</div><div class="c" style="left:428px;width:54px">0</div><div class="c" style="left:482px;width:50px">65.51</div><div class="c" style="left:532px;width:91px">51.4044</div><div class="c" style="left:623px;width:88px">6589</div><div class="c" style="left:711px;width:1px;background:#ececec"></div></div><div class="row" style="top:69px"><svg class="abs" style="left:6px;top:4px" width="9" height="12"><path d="M0 0h8v2h-3v7h3v2h-8v-2h3v-7h-3z" fill="#000"/></svg><div class="c c0" style="left:18px;width:59px">23K2</div><div class="c" style="left:77px;width:70px">230</div><div class="c" style="left:147px;width:70px">240</div><div class="c" style="left:217px;width:79px">8</div><div class="c" style="left:296px;width:74px">12</div><div class="c" style="left:370px;width:58px">14</div><div class="c" style="left:428px;width:54px">0</div><div class="c" style="left:482px;width:50px">75.77</div><div class="c" style="left:532px;width:91px">59.4552</div><div class="c" style="left:623px;width:88px">7601</div><div class="c" style="left:711px;width:1px;background:#ececec"></div></div><div class="row" style="top:86px"><svg class="abs" style="left:6px;top:4px" width="9" height="12"><path d="M0 0h8v2h-3v7h3v2h-8v-2h3v-7h-3z" fill="#000"/></svg><div class="c c0" style="left:18px;width:59px">26K1</div><div class="c" style="left:77px;width:70px">255</div><div class="c" style="left:147px;width:70px">260</div><div class="c" style="left:217px;width:79px">8</div><div class="c" style="left:296px;width:74px">12</div><div class="c" style="left:370px;width:58px">16</div><div class="c" style="left:428px;width:54px">0</div><div class="c" style="left:482px;width:50px">83.08</div><div class="c" style="left:532px;width:91px">65.1912</div><div class="c" style="left:623px;width:88px">10300</div><div class="c" style="left:711px;width:1px;background:#ececec"></div></div><div class="row" style="top:103px"><svg class="abs" style="left:6px;top:4px" width="9" height="12"><path d="M0 0h8v2h-3v7h3v2h-8v-2h3v-7h-3z" fill="#000"/></svg><div class="c c0" style="left:18px;width:59px">26K2</div><div class="c" style="left:77px;width:70px">258</div><div class="c" style="left:147px;width:70px">260</div><div class="c" style="left:217px;width:79px">9</div><div class="c" style="left:296px;width:74px">13.5</div><div class="c" style="left:370px;width:58px">16</div><div class="c" style="left:428px;width:54px">0</div><div class="c" style="left:482px;width:50px">93.19</div><div class="c" style="left:532px;width:91px">73.1243</div><div class="c" style="left:623px;width:88px">11700</div><div class="c" style="left:711px;width:1px;background:#ececec"></div></div><div class="row" style="top:120px"><svg class="abs" style="left:6px;top:4px" width="9" height="12"><path d="M0 0h8v2h-3v7h3v2h-8v-2h3v-7h-3z" fill="#000"/></svg><div class="c c0" style="left:18px;width:59px">26K3</div><div class="c" style="left:77px;width:70px">262</div><div class="c" style="left:147px;width:70px">260</div><div class="c" style="left:217px;width:79px">10</div><div class="c" style="left:296px;width:74px">15.5</div><div class="c" style="left:370px;width:58px">16</div><div class="c" style="left:428px;width:54px">0</div><div class="c" style="left:482px;width:50px">105.9</div><div class="c" style="left:532px;width:91px">83.0976</div><div class="c" style="left:623px;width:88px">13560</div><div class="c" style="left:711px;width:1px;background:#ececec"></div></div><div class="row" style="top:137px"><svg class="abs" style="left:6px;top:4px" width="9" height="12"><path d="M0 0h8v2h-3v7h3v2h-8v-2h3v-7h-3z" fill="#000"/></svg><div class="c c0" style="left:18px;width:59px">30K1</div><div class="c" style="left:77px;width:70px">296</div><div class="c" style="left:147px;width:70px">300</div><div class="c" style="left:217px;width:79px">9</div><div class="c" style="left:296px;width:74px">13.5</div><div class="c" style="left:370px;width:58px">18</div><div class="c" style="left:428px;width:54px">0</div><div class="c" style="left:482px;width:50px">108</div><div class="c" style="left:532px;width:91px">84.7454</div><div class="c" style="left:623px;width:88px">18110</div><div class="c" style="left:711px;width:1px;background:#ececec"></div></div><div class="row" style="top:154px"><svg class="abs" style="left:6px;top:4px" width="9" height="12"><path d="M0 0h8v2h-3v7h3v2h-8v-2h3v-7h-3z" fill="#000"/></svg><div class="c c0" style="left:18px;width:59px">30K2</div><div class="c" style="left:77px;width:70px">300</div><div class="c" style="left:147px;width:70px">300</div><div class="c" style="left:217px;width:79px">10</div><div class="c" style="left:296px;width:74px">15.5</div><div class="c" style="left:370px;width:58px">18</div><div class="c" style="left:428px;width:54px">0</div><div class="c" style="left:482px;width:50px">122.7</div><div class="c" style="left:532px;width:91px">96.2802</div><div class="c" style="left:623px;width:88px">20930</div><div class="c" style="left:711px;width:1px;background:#ececec"></div></div><div class="row" style="top:171px"><svg class="abs" style="left:6px;top:4px" width="9" height="12"><path d="M0 0h8v2h-3v7h3v2h-8v-2h3v-7h-3z" fill="#000"/></svg><div class="c c0" style="left:18px;width:59px">30K3</div><div class="c" style="left:77px;width:70px">304</div><div class="c" style="left:147px;width:70px">300</div><div class="c" style="left:217px;width:79px">11.5</div><div class="c" style="left:296px;width:74px">17.5</div><div class="c" style="left:370px;width:58px">18</div><div class="c" style="left:428px;width:54px">0</div><div class="c" style="left:482px;width:50px">138.72</div><div class="c" style="left:532px;width:91px">108.851</div><div class="c" style="left:623px;width:88px">23910</div><div class="c" style="left:711px;width:1px;background:#ececec"></div></div><div class="abs" style="left:0;top:17px;width:1px;height:168px;background:#fff"></div></div><div class="sb"><div class="sbb" style="top:0"><svg class="abs" style="left:0;top:0" width="14" height="14"><path d="M3 9l4-4l4 4" fill="none" stroke="#4d6185" stroke-width="2.200"/></svg></div><div class="sbt" style="top:17px;height:75px"><svg class="abs" style="left:3px;top:33px" width="8" height="9"><path d="M0 0.500h6M0 2.500h6M0 4.500h6M0 6.500h6" stroke="#eef4fe"/><path d="M1 1.500h6M1 3.500h6M1 5.500h6M1 7.500h6" stroke="#8cb0f8"/></svg></div><div class="sbb" style="top:168px;height:16px"><svg class="abs" style="left:0;top:0" width="14" height="14"><path d="M3 5l4 4l4-4" fill="none" stroke="#4d6185" stroke-width="2.200"/></svg></div><div class="sbs" style="top:16px"></div><div class="sbs" style="top:184px"></div><div class="sbs" style="top:92px"></div></div><div class="dg" style="top:3px"><svg width="186" height="190" viewBox="731 312 186 190" fill="none" stroke="#000" stroke-width="1" shape-rendering="crispEdges"><path d="M801.5 352.5H851.5V354.5L847 356.5H833Q828 357.5 827.5 362V444Q828 448.500 833 449.500H847L851.500 451.500V453.500H801.500V451.500L806 449.500H820Q825 448.500 825.500 444V362Q825 357.500 820 356.500H806L801.500 354.500Z" fill="#808080"/><path d="M826.5 318V325M826.5 326V328M826.5 330V347M826.5 348V350M826.5 352V365M826.5 367V369M826.5 371V383M826.5 385V387M826.5 389V401M826.5 403V405M826.5 407V419M826.5 421V423M826.5 425V437M826.5 439V441M826.5 443V455M826.5 457V458M826.5 459V472" /><path d="M794 407.5H811M813 407.5H815M817 407.5H835M838 407.5H840M843 407.5H863" /><path d="M782 352.5H852" /><path d="M782 453.5H852" /><path d="M786.5 353V453" /><path shape-rendering="auto" d="M789.0 357.0L786.5 353L784.0 357.0"/><path shape-rendering="auto" d="M784.0 449.5L786.5 453.5L789.0 449.5"/><path d="M801.5 335V352" /><path d="M851.5 335V352" /><path d="M802 339.5H851" /><path shape-rendering="auto" d="M806.0 337.0L802 339.5L806.0 342.0"/><path shape-rendering="auto" d="M847.5 342.0L851.5 339.5L847.5 337.0"/><path d="M830.5 359.5L844.5 373.5H863" /><path shape-rendering="auto" d="M834.7 360.9L830.5 359.5L831.9 363.7"/><path d="M816 381.5H825M828 381.5H837" /><path shape-rendering="auto" d="M822.0 384.0L825 381.5L822.0 379.0"/><path shape-rendering="auto" d="M831.5 379.0L828.5 381.5L831.5 384.0"/><path d="M873 436.5H862.5L849.5 449.5" /><path shape-rendering="auto" d="M850.9 445.3L849.5 449.5L853.7 448.1"/><path d="M838.5 441V463" /><path shape-rendering="auto" d="M836.0 446.5L838.5 449.5L841.0 446.5"/><path shape-rendering="auto" d="M841.0 456.5L838.5 453.5L836.0 456.5"/><text x="812.5" y="321.5" stroke="none" text-anchor="start">Y</text><text x="813.5" y="477" stroke="none" text-anchor="start">Y</text><text x="801.5" y="403.5" stroke="none" text-anchor="start">X</text><text x="848.5" y="403.5" stroke="none" text-anchor="start">X</text><text x="832.5" y="337.5" stroke="none" text-anchor="start">b</text><text x="850" y="372" stroke="none" text-anchor="start">R</text><text x="812.5" y="379.5" stroke="none" text-anchor="start">d</text><text x="775" y="407" stroke="none" text-anchor="start">h</text><text x="866" y="435.5" stroke="none" text-anchor="start">r</text><text x="840" y="471" stroke="none" text-anchor="start">t</text></svg></div></div></div>
<div class="child ina" style="top:504px"><div class="ctitle"><svg class="abs" style="left:4px;top:4px" width="26" height="18" viewBox="10 72 26 18">
<path d="M16 80.500L18 79L24 74V81L18 87.500H16z" fill="#8c8c8c"/>
<path d="M13 79L19 73.500H24L18 79z" fill="#d4d4d4" stroke="#000" stroke-width="1"/>
<path d="M18.500 87.500L25 80.500" stroke="#000" stroke-width="1.600"/>
<path d="M12 78.500h6.500v2.500h-2v5h2v2.500h-6.500v-2.500h2v-5h-2z" fill="#000"/>
<path d="M13 80h4.500M15 80v6.500M13 86.500h4.500" stroke="#b4b4b4" stroke-width="1" fill="none"/>
<path d="M19 78h2v8h7v2h-9z" fill="#ff0"/>
<path d="M23 81h5v2h-3v3h-2z" fill="#ff0"/>
</svg><span class="t" style="left:26px;top:4px;font-size:15px;line-height:17px">UG_S.SRT</span><div class="btn" style="left:887px;top:6px"><svg width="12" height="12"><rect x="2" y="8" width="5" height="2" fill="#fff"/></svg></div><div class="btn" style="left:903px;top:6px"><svg width="12" height="12"><path d="M2.5 3.5h7v6h-7z" fill="none" stroke="#fff"/><rect x="2" y="2" width="8" height="2" fill="#fff"/></svg></div><div class="btn x" style="left:919px;top:6px"><svg width="12" height="12"><path d="M3 3l6 6M9 3l-6 6" stroke="#fff" stroke-width="2" fill="none"/></svg></div></div><div class="bl"></div><div class="br"></div><div class="bb"></div><div class="cl"><div class="abs" style="left:0;top:0;width:931px;height:1px;background:#aca899"></div><div class="abs" style="left:0;top:0;width:1px;height:189px;background:#aca899"></div><div class="abs" style="left:7px;top:1px;width:1px;height:188px;background:#aca899"></div><div class="abs" style="left:1px;top:1px;width:1px;height:188px;background:#000"></div><div class="abs" style="left:2px;top:0;width:2px;height:190px;background:#fff"></div><div class="abs" style="left:8px;top:1px;width:921px;height:188px;background:#000"></div><div class="abs" style="left:0;top:189px;width:931px;height:2px;background:#fff"></div><div class="abs" style="left:929px;top:0;width:2px;height:191px;background:#fff"></div><div class="abs" style="left:4px;top:189px;width:4px;height:1px;background:#ece9d8"></div><div class="lv"><div class="hd"><div class="hc l d" style="left:0px;width:87px"><i></i><b>Designation</b></div><div class="hc" style="left:87px;width:58px"><i></i><b>b, width</b></div><div class="hc" style="left:145px;width:80px"><i></i><b>tf, thickness</b></div><div class="hc" style="left:225px;width:56px"><i></i><b>R, radius</b></div><div class="hc" style="left:281px;width:55px"><i></i><b>r, radius</b></div><div class="hc" style="left:336px;width:54px"><i></i><b>A, area</b></div><div class="hc l e" style="left:390px;width:80px"><i></i><b>Ix, moment...</b></div><div class="hc l e" style="left:470px;width:80px"><i></i><b>Iv, minimal ...</b></div><div class="hc" style="left:550px;width:43px"><i></i><b>Zo</b></div><div class="hc" style="left:593px;width:118px"><i></i><b>Wt. per unit length</b></div><div class="hc" style="left:711px;width:197px"><i></i></div></div><div class="row" style="top:18px"><svg class="abs" style="left:6px;top:4px" width="11" height="12"><path d="M0 0l2 1v7q0 1 1 1h6l1 2h-10z" fill="#000"/></svg><div class="c c0" style="left:18px;width:69px">70 x 70 x 6</div><div class="c" style="left:87px;width:58px">70</div><div class="c" style="left:145px;width:80px">6</div><div class="c" style="left:225px;width:56px">8</div><div class="c" style="left:281px;width:55px">2.7</div><div class="c" style="left:336px;width:54px">8.15</div><div class="c" style="left:390px;width:80px">37.58</div><div class="c" style="left:470px;width:80px">15.52</div><div class="c" style="left:550px;width:43px">1.94</div><div class="c" style="left:593px;width:118px">6.39514</div><div class="c" style="left:711px;width:1px;background:#ececec"></div></div><div class="row" style="top:35px"><svg class="abs" style="left:6px;top:4px" width="11" height="12"><path d="M0 0l2 1v7q0 1 1 1h6l1 2h-10z" fill="#000"/></svg><div class="c c0" style="left:18px;width:69px">80 x 80 x 5.5</div><div class="c" style="left:87px;width:58px">80</div><div class="c" style="left:145px;width:80px">5.5</div><div class="c" style="left:225px;width:56px">9</div><div class="c" style="left:281px;width:55px">3</div><div class="c" style="left:336px;width:54px">8.63</div><div class="c" style="left:390px;width:80px">52.68</div><div class="c" style="left:470px;width:80px">21.8</div><div class="c" style="left:550px;width:43px">2.17</div><div class="c" style="left:593px;width:118px">6.77179</div><div class="c" style="left:711px;width:1px;background:#ececec"></div></div><div class="row" style="top:52px"><svg class="abs" style="left:6px;top:4px" width="11" height="12"><path d="M0 0l2 1v7q0 1 1 1h6l1 2h-10z" fill="#000"/></svg><div class="c c0" style="left:18px;width:69px">75 x 75 x 6</div><div class="c" style="left:87px;width:58px">75</div><div class="c" style="left:145px;width:80px">6</div><div class="c" style="left:225px;width:56px">9</div><div class="c" style="left:281px;width:55px">3</div><div class="c" style="left:336px;width:54px">8.78</div><div class="c" style="left:390px;width:80px">46.57</div><div class="c" style="left:470px;width:80px">19.28</div><div class="c" style="left:550px;width:43px">2.06</div><div class="c" style="left:593px;width:118px">6.88949</div><div class="c" style="left:711px;width:1px;background:#ececec"></div></div><div class="row" style="top:69px"><svg class="abs" style="left:6px;top:4px" width="11" height="12"><path d="M0 0l2 1v7q0 1 1 1h6l1 2h-10z" fill="#000"/></svg><div class="c c0" style="left:18px;width:69px">60 x 60 x 8</div><div class="c" style="left:87px;width:58px">60</div><div class="c" style="left:145px;width:80px">8</div><div class="c" style="left:225px;width:56px">7</div><div class="c" style="left:281px;width:55px">2.3</div><div class="c" style="left:336px;width:54px">9.04</div><div class="c" style="left:390px;width:80px">29.55</div><div class="c" style="left:470px;width:80px">12.34</div><div class="c" style="left:550px;width:43px">1.78</div><div class="c" style="left:593px;width:118px">7.09351</div><div class="c" style="left:711px;width:1px;background:#ececec"></div></div><div class="row" style="top:86px"><svg class="abs" style="left:6px;top:4px" width="11" height="12"><path d="M0 0l2 1v7q0 1 1 1h6l1 2h-10z" fill="#000"/></svg><div class="c c0" style="left:18px;width:69px">80 x 80 x 6</div><div class="c" style="left:87px;width:58px">80</div><div class="c" style="left:145px;width:80px">6</div><div class="c" style="left:225px;width:56px">9</div><div class="c" style="left:281px;width:55px">3</div><div class="c" style="left:336px;width:54px">9.38</div><div class="c" style="left:390px;width:80px">56.97</div><div class="c" style="left:470px;width:80px">23.54</div><div class="c" style="left:550px;width:43px">2.19</div><div class="c" style="left:593px;width:118px">7.3603</div><div class="c" style="left:711px;width:1px;background:#ececec"></div></div><div class="row" style="top:103px"><svg class="abs" style="left:6px;top:4px" width="11" height="12"><path d="M0 0l2 1v7q0 1 1 1h6l1 2h-10z" fill="#000"/></svg><div class="c c0" style="left:18px;width:69px">70 x 70 x 7</div><div class="c" style="left:87px;width:58px">70</div><div class="c" style="left:145px;width:80px">7</div><div class="c" style="left:225px;width:56px">8</div><div class="c" style="left:281px;width:55px">2.7</div><div class="c" style="left:336px;width:54px">9.42</div><div class="c" style="left:390px;width:80px">42.98</div><div class="c" style="left:470px;width:80px">17.77</div><div class="c" style="left:550px;width:43px">1.99</div><div class="c" style="left:593px;width:118px">7.39169</div><div class="c" style="left:711px;width:1px;background:#ececec"></div></div><div class="row" style="top:120px"><svg class="abs" style="left:6px;top:4px" width="11" height="12"><path d="M0 0l2 1v7q0 1 1 1h6l1 2h-10z" fill="#000"/></svg><div class="c c0" style="left:18px;width:69px">75 x 75 x 7</div><div class="c" style="left:87px;width:58px">75</div><div class="c" style="left:145px;width:80px">7</div><div class="c" style="left:225px;width:56px">9</div><div class="c" style="left:281px;width:55px">3</div><div class="c" style="left:336px;width:54px">10.15</div><div class="c" style="left:390px;width:80px">53.34</div><div class="c" style="left:470px;width:80px">22.07</div><div class="c" style="left:550px;width:43px">2.1</div><div class="c" style="left:593px;width:118px">7.9645</div><div class="c" style="left:711px;width:1px;background:#ececec"></div></div><div class="row" style="top:137px"><svg class="abs" style="left:6px;top:4px" width="11" height="12"><path d="M0 0l2 1v7q0 1 1 1h6l1 2h-10z" fill="#000"/></svg><div class="c c0" style="left:18px;width:69px">90 x 90 x 6</div><div class="c" style="left:87px;width:58px">90</div><div class="c" style="left:145px;width:80px">6</div><div class="c" style="left:225px;width:56px">10</div><div class="c" style="left:281px;width:55px">3.3</div><div class="c" style="left:336px;width:54px">10.61</div><div class="c" style="left:390px;width:80px">82.1</div><div class="c" style="left:470px;width:80px">33.97</div><div class="c" style="left:550px;width:43px">2.43</div><div class="c" style="left:593px;width:118px">8.32546</div><div class="c" style="left:711px;width:1px;background:#ececec"></div></div><div class="row" style="top:154px"><svg class="abs" style="left:6px;top:4px" width="11" height="12"><path d="M0 0l2 1v7q0 1 1 1h6l1 2h-10z" fill="#000"/></svg><div class="c c0" style="left:18px;width:69px">70 x 70 x 8</div><div class="c" style="left:87px;width:58px">70</div><div class="c" style="left:145px;width:80px">8</div><div class="c" style="left:225px;width:56px">8</div><div class="c" style="left:281px;width:55px">2.7</div><div class="c" style="left:336px;width:54px">10.67</div><div class="c" style="left:390px;width:80px">48.16</div><div class="c" style="left:470px;width:80px">19.97</div><div class="c" style="left:550px;width:43px">2.02</div><div class="c" style="left:593px;width:118px">8.37254</div><div class="c" style="left:711px;width:1px;background:#ececec"></div></div><div class="row" style="top:171px"><svg class="abs" style="left:6px;top:4px" width="11" height="12"><path d="M0 0l2 1v7q0 1 1 1h6l1 2h-10z" fill="#000"/></svg><div class="c c0" style="left:18px;width:69px">80 x 80 x 7</div><div class="c" style="left:87px;width:58px">80</div><div class="c" style="left:145px;width:80px">7</div><div class="c" style="left:225px;width:56px">9</div><div class="c" style="left:281px;width:55px">3</div><div class="c" style="left:336px;width:54px">10.85</div><div class="c" style="left:390px;width:80px">65.31</div><div class="c" style="left:470px;width:80px">26.97</div><div class="c" style="left:550px;width:43px">2.23</div><div class="c" style="left:593px;width:118px">8.51378</div><div class="c" style="left:711px;width:1px;background:#ececec"></div></div><div class="abs" style="left:0;top:17px;width:1px;height:168px;background:#fff"></div></div><div class="sb"><div class="sbb" style="top:0"><svg class="abs" style="left:0;top:0" width="14" height="14"><path d="M3 9l4-4l4 4" fill="none" stroke="#4d6185" stroke-width="2.200"/></svg></div><div class="sbt" style="top:68px;height:11px"></div><div class="sbb" style="top:168px;height:16px"><svg class="abs" style="left:0;top:0" width="14" height="14"><path d="M3 5l4 4l4-4" fill="none" stroke="#4d6185" stroke-width="2.200"/></svg></div><div class="sbs" style="top:16px"></div><div class="sbs" style="top:184px"></div><div class="sbs" style="top:79px"></div></div><div class="dg" style="top:3px"><svg width="186" height="190" viewBox="731 530 186 190" fill="none" stroke="#000" stroke-width="1" shape-rendering="crispEdges"><path d="M808.5 592.5H810.5Q814 594 814.5 599V643Q815 651 822 651.5H866Q871.5 652.5 872.5 657.5H808.5Z" fill="#808080"/><path d="M823.5 558V570M823.5 572V574M823.5 576V588M823.5 590V592M823.5 594V606M823.5 608V610M823.5 612V624M823.5 626V628M823.5 630V665M823.5 667V669M823.5 672V676M823.5 679V698" /><path d="M753 642.5H766M767 642.5H769M772 642.5H830M835 642.5H869M871 642.5H873M875 642.5H906" /><path d="M738 557L767 586M769 588L771 590M773 592L852 671M855 674L857 676M860 679L890 709" /><path d="M882 584L857 609M854 612L852 614M849 617L808 658M806 660L804 662M802 664L786 680" /><path d="M779 592.5H809" /><path d="M779 657.5H898" /><path d="M782.5 593V657" /><path shape-rendering="auto" d="M785.0 597.0L782.5 593L780.0 597.0"/><path shape-rendering="auto" d="M780.0 653.5L782.5 657.5L785.0 653.5"/><path d="M808.5 658V681" /><path d="M872.5 658V681" /><path d="M809 678.5H872" /><path shape-rendering="auto" d="M813.0 676.0L809 678.5L813.0 681.0"/><path shape-rendering="auto" d="M868.5 681.0L872.5 678.5L868.5 676.0"/><path d="M844 571.5H835.5L813.5 593.5" /><path shape-rendering="auto" d="M814.9 589.3L813.5 593.5L817.7 592.1"/><path d="M869 629.5H857.5L820.5 649.5" /><path shape-rendering="auto" d="M823.2 645.9L820.5 649.5L825.0 649.5"/><path d="M866 651.5H884" /><path d="M881.5 647V651M881.5 658V666" /><path shape-rendering="auto" d="M879.0 648.5L881.5 651.5L884.0 648.5"/><path shape-rendering="auto" d="M884.0 660.5L881.5 657.5L879.0 660.5"/><path d="M895.5 643V666" /><path shape-rendering="auto" d="M898.0 646.5L895.5 642.5L893.0 646.5"/><path shape-rendering="auto" d="M893.0 653.5L895.5 657.5L898.0 653.5"/><rect x="822" y="641" width="3" height="3" fill="#000" stroke="none"/><text x="741" y="557.5" stroke="none" text-anchor="start">V</text><text x="825.5" y="557" stroke="none" text-anchor="start">Y</text><text x="839" y="569" stroke="none" text-anchor="start">r</text><text x="882" y="583" stroke="none" text-anchor="start">U</text><text x="772.5" y="628.5" stroke="none" text-anchor="start">b</text><text x="741" y="638.5" stroke="none" text-anchor="start">X</text><text x="897.5" y="638.5" stroke="none" text-anchor="start">X</text><text x="859.5" y="628" stroke="none" text-anchor="start">R</text><text x="884" y="673" stroke="none" text-anchor="start">t</text><text x="899.5" y="673" stroke="none" text-anchor="start">Zo</text><text x="834" y="676" stroke="none" text-anchor="start">b</text><text x="775.5" y="689" stroke="none" text-anchor="start">U</text><text x="828.5" y="710" stroke="none" text-anchor="start">Y</text><text x="888.5" y="705" stroke="none" text-anchor="start">V</text></svg></div></div></div>
<div id="status" class="abs"><span style="left:1px;top:5px">Ready</span></div>
<div class="pane" style="left:675px"><span class="abs" style="left:1px;top:2px;font-size:12px;line-height:15px;white-space:nowrap;word-spacing:3.5px">mm | cm</span></div>
<div class="pane" style="left:760px"><span class="abs" style="left:1px;top:2px;font-size:12px;line-height:15px;white-space:nowrap;word-spacing:3.5px">kg | m</span></div>
<div class="pane" style="left:845px"><span class="abs" style="left:1px;top:2px;font-size:12px;line-height:15px;white-space:nowrap;word-spacing:3.5px">MN | m</span></div>
<svg class="abs" style="left:933px;top:732px" width="14" height="14"><path d="M13 2L2 13M13 6L6 13M13 10L10 13" stroke="#b8b4a2" stroke-width="1.5"/><path d="M13 3L3 13M13 7L7 13M13 11L11 13" stroke="#fff" stroke-width="0.800"/></svg>
</div>
</body></html>
